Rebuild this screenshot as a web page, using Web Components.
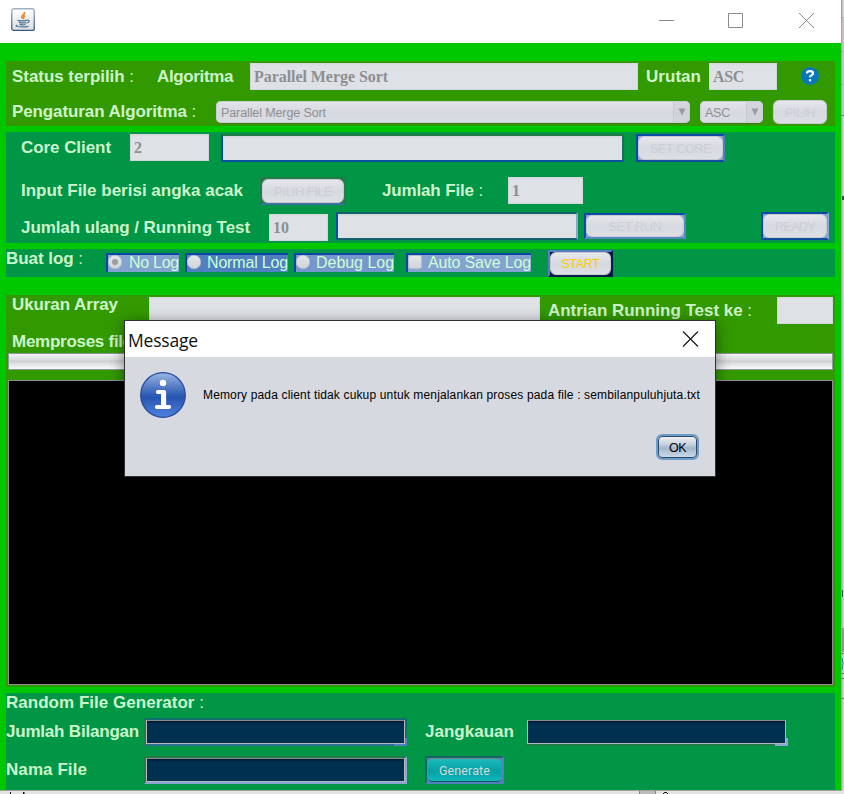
<!DOCTYPE html>
<html lang="id">
<head>
<meta charset="utf-8">
<title>Parallel Merge Sort</title>
<style>
html,body{margin:0;padding:0}
body{width:844px;height:794px;overflow:hidden;background:#e2e0e1;font-family:"Liberation Sans",Arial,sans-serif}
</style>
</head>
<body>
<app-desktop></app-desktop>
<script>
// g = gap before, t = offset from the row's top, w / h = box size
class Sized extends HTMLElement {
  connectedCallback() {
    if (this.shadowRoot) return;
    const m = { g: 'marginLeft', t: 'marginTop', w: 'width', h: 'height' };
    for (const k in m) if (this.hasAttribute(k)) this.style[m[k]] = this.getAttribute(k) + 'px';
    this.attachShadow({ mode: 'open' }).innerHTML =
      '<style>:host{display:block;box-sizing:border-box;flex:none}</style>' + this.view();
    this.ready();
  }
  view() { return '<slot></slot>'; }
  ready() {}
  a(n, d = '') { return this.getAttribute(n) ?? d; }
}

// Text spaced evenly so that it fills the element's width
class FitText extends Sized {
  view() {
    return `<style>:host{height:20px;line-height:20px;white-space:pre;font-size:17px;font-weight:bold;color:#ccf5cc}
    i{font-style:normal;font-weight:normal}span{display:inline-block}</style><span></span>`;
  }
  ready() {
    const s = this.shadowRoot.querySelector('span'), txt = this.textContent;
    if (txt.endsWith(' :')) s.innerHTML = txt.slice(0, -1) + '<i>:</i>'; else s.textContent = txt;
    if (this.hasAttribute('size')) this.style.fontSize = this.a('size') + 'px';
    const want = +this.a('w'), got = s.getBoundingClientRect().width;
    s.style.letterSpacing = (want - got) / txt.length + 'px';
  }
}
customElements.define('fit-text', FitText);

class UiRow extends Sized {
  view() { return '<style>:host{display:flex;align-items:flex-start}</style><slot></slot>'; }
}
customElements.define('ui-row', UiRow);

class UiPanel extends Sized {
  view() { return `<style>:host{display:flex;flex-direction:column;width:829px;margin-left:6px;background:${this.a('color')}}</style><slot></slot>`; }
}
customElements.define('ui-panel', UiPanel);

class TextField extends Sized {
  view() {
    return `<style>:host{background:linear-gradient(#d4d7dc,#dee1e6 3px);border:solid #d2d5db;border-width:0 1px 1px;padding:4px 0 0 3px;height:27px}
    :host([edge]){border:2px solid;border-color:${this.a('edge')};background-clip:padding-box}
    fit-text{color:#8e8f90;font-family:"Liberation Serif","Times New Roman",serif}</style>
    ${this.a('value') ? `<fit-text size="16" w="${this.a('tw')}">${this.a('value')}</fit-text>` : ''}`;
  }
}
customElements.define('text-field', TextField);

class DarkField extends Sized {
  view() {
    return `<style>:host{position:relative;border:2px solid;border-color:${this.a('edge')};height:28px}
    div{box-sizing:border-box;height:24px;border:1px solid #b8b8b8;border-top-color:#8a8a8e;background:linear-gradient(#001830,#003050 3px)}
    s{position:absolute;right:-2px;bottom:-2px;width:13px;height:2px;background:${this.a('corner')}}
    s+s{width:2px;height:8px}</style><div></div>${this.a('corner') ? '<s></s><s></s>' : ''}`;
  }
}
customElements.define('dark-field', DarkField);

class UiCombo extends Sized {
  view() {
    return `<style>:host{display:flex;height:22px;border-radius:5px;background:linear-gradient(#e2e4e9,#d6d9e0 55%,#dadde4);box-shadow:inset 0 0 0 1px #c9ccd3,0 1px 1px #3a7a1c;padding-left:5px;overflow:hidden}
    fit-text{color:#8e8f90;font-weight:normal;flex:none;margin-top:2px}
    b{margin-left:auto;width:17px;height:22px;background:#c9ccd480;border-left:1px solid #c6c9d0;box-sizing:border-box}
    svg{display:block;margin:7px 0 0 4px}</style>
    <fit-text size="12.5" w="${this.a('tw')}">${this.a('value')}</fit-text>
    <b><svg width="8" height="8"><path d="M.5 .5h7l-3.500 7z" fill="#9a9ca2"/></svg></b>`;
  }
}
customElements.define('ui-combo', UiCombo);

class UiButton extends Sized {
  view() {
    return `<style>:host{border:2px solid;border-color:${this.a('edge', 'transparent')};background:${this.a('under', 'transparent')};height:28px}
    div{box-sizing:border-box;height:100%;border-radius:6px;background:linear-gradient(#e5e7ec,#d6d9df 50%,#dcdfe4);border:1px solid #c8cad2;box-shadow:0 0 1px #7b7d84;display:flex;align-items:center;justify-content:center}
    fit-text{font-weight:normal;color:${this.a('ink', '#cbced4')}}</style>
    <div><fit-text size="${this.a('size', '12.5')}" t="${this.a('tt', 1)}" w="${this.a('tw')}">${this.textContent}</fit-text></div>`;
  }
}
customElements.define('ui-button', UiButton);

class UiToggle extends Sized {
  view() {
    const k = this.a('kind');
    const box = k === 'check'
      ? '<rect x=".5" y=".5" width="13" height="13" rx="2" fill="url(#g)" stroke="#b9bcc5"/>'
      : '<circle cx="7" cy="7" r="6.800" fill="url(#g)" stroke="#b9bcc5" stroke-width=".6"/>' +
        (k === 'on' ? '<circle cx="7" cy="7" r="3" fill="#9b9da3"/>' : '');
    return `<style>:host{display:flex;height:19px;border:solid #0846a2;border-width:2px 0 0 2px;background:${this.a('bg')}}
    svg{flex:none}fit-text{font-weight:normal;margin-top:-2px;margin-left:${this.a('tg')}px;color:#ccffd5}</style>
    <svg width="14" height="16"><defs><linearGradient id="g" x2="0" y2="1"><stop stop-color="#e6e7ea"/><stop offset="1" stop-color="#cfd2d9"/></linearGradient></defs>${box}</svg>
    <fit-text size="16" w="${this.a('tw')}">${this.textContent}</fit-text>`;
  }
}
customElements.define('ui-toggle', UiToggle);

class HelpIcon extends Sized {
  view() {
    return `<svg width="18" height="18" style="display:block"><circle cx="9" cy="9" r="9" fill="#0a77bd"/>
    <path d="M6 6.500V6q0-1.800 3-1.800t3 2q0 1.300-1.500 2-1.500.7-1.500 2" fill="none" stroke="#fff" stroke-width="2.200"/><path d="M7.900 12.200h2.300v2.100H7.900z" fill="#fff"/></svg>`;
  }
}
customElements.define('help-icon', HelpIcon);

class TitleBar extends Sized {
  view() {
    return `<style>:host{display:flex;height:43px;background:#fff;width:841px}svg{flex:none}</style>
    <svg width="24" height="24" style="margin:8px 0 0 11px"><defs><linearGradient id="j" x2="0" y2="1"><stop stop-color="#fff"/><stop offset="1" stop-color="#dcdddf"/></linearGradient><linearGradient id="k" x2="0" y2="1"><stop stop-color="#9fb2c4"/><stop offset="1" stop-color="#37597a"/></linearGradient></defs>
      <rect x=".75" y=".75" width="22.500" height="21.700" rx="2" fill="url(#j)" stroke="url(#k)" stroke-width="1.300"/>
      <path d="M13.300 4q.8 1.700-1.600 3.300-2 1.500.1 3.300M14 7.800q-2.300 1-1 3" fill="none" stroke="#ee8222" stroke-width="1.500"/>
      <path d="M6.500 12.400q4 1 9.500 0M8 14.400q3.500 1 7 .2M8.600 16.400q3 .9 6 .1M16 12.200q2.500-.4 2.200 1.100-.3 1.200-2.700 1.800M6.500 17.200q-3 .6 0 1.300 5 .9 11-.2" fill="none" stroke="#4d7898" stroke-width="1.200"/></svg>
    <svg width="160" height="17" style="margin:12px 0 0 624px"><path d="M0 8.500h15M69.500 1.500h14v14h-14zM140 1l15 15M155 1l-15 15" fill="none" stroke="#8b8b8b"/></svg>`;
  }
}
customElements.define('title-bar', TitleBar);

class ProgressBar extends Sized {
  view() {
    return `<style>:host{height:17px;border:1px solid #93959c;background:linear-gradient(#f4f4f5,#dcdde0 35%,#cfd0d4 50%,#dcdde0 60%,#fafafa)}</style>`;
  }
}
customElements.define('progress-bar', ProgressBar);

class ConsoleArea extends Sized {
  view() { return '<style>:host{background:#000;border:1px solid #8e8e96}</style>'; }
}
customElements.define('console-area', ConsoleArea);

class MessageDialog extends Sized {
  view() {
    return `<style>:host{position:absolute;left:124px;top:320px;width:592px;height:157px;border:1px solid #2f3230;background:#d6d9e0;box-shadow:0 3px 14px #0007}
    header{height:36px;background:#fff;display:flex}
    .t{font-family:"Open Sans","Noto Sans",sans-serif;font-weight:normal;color:#111;margin:9px 0 0 3px}
    header svg{margin:10px 0 0 484px}
    section{display:flex;padding:15px 0 0 15px}
    .m{color:#000;font-weight:normal;margin:13px 0 0 17px}
    .ok{margin:16px 0 0 531px;width:43px;height:26px;box-sizing:border-box;border-radius:6px;border:2px solid #6f9dc9;background:#d6d9e0}
    .ok div{height:22px;box-sizing:border-box;border:1px solid #2c4b6a;border-radius:4px;background:linear-gradient(#eef1f5,#c3cedb 40%,#a3b6c9 55%,#c9dbe9);display:flex;justify-content:center}
    .ok fit-text{color:#000;font-weight:normal;margin-top:1px}</style>
    <header><fit-text class="t" size="17.5" w="70">Message</fit-text>
      <svg width="17" height="17"><path d="M1 0.500l15 15M16 0.500l-15 15" stroke="#111" stroke-width="1.100"/></svg></header>
    <section><svg width="46" height="46"><defs><linearGradient id="b" x2="0" y2="1"><stop stop-color="#9db7e6"/><stop offset=".35" stop-color="#4d75c2"/><stop offset=".55" stop-color="#2655b0"/><stop offset="1" stop-color="#5182e0"/></linearGradient></defs>
      <circle cx="23" cy="23" r="22.300" fill="url(#b)" stroke="#24489a" stroke-width="1.200"/><circle cx="23" cy="11" r="3.200" fill="#fff"/>
      <path d="M18 20h6v15M17 35h12" fill="none" stroke="#fff" stroke-width="4.200" stroke-linecap="round" stroke-linejoin="round"/><path d="M21 20h5v14h-5z" fill="#fff"/></svg>
      <fit-text class="m" size="12" w="497">Memory pada client tidak cukup untuk menjalankan proses pada file : sembilanpuluhjuta.txt</fit-text></section>
    <div class="ok"><div><fit-text size="12.5" w="17">OK</fit-text></div></div>`;
  }
}
customElements.define('message-dialog', MessageDialog);

const G1 = '#339900', G2 = '#009645';
class AppDesktop extends HTMLElement {
  constructor() {
    super();
    this.attachShadow({ mode: 'open' }).innerHTML = `<style>
    :host{display:block;width:844px;height:794px;position:relative}
    main{width:841px;height:790px;background:#00c800;display:flex;flex-direction:column;box-shadow:0 0 3px 1px #7d7d7d}
    .gen{box-sizing:border-box;flex:none;width:79px;height:28px;margin:2px 0 0 18px;border:solid;border-color:#156868 #5080c0 #5080c0 #156868;border-width:2px;background:#5080c0}
    .gen div{height:24px;box-sizing:border-box;border:1px solid #807f83;border-bottom-color:#16545c;border-radius:5px;background:linear-gradient(#1bbabc,#07a0a4 55%,#10b8bc);display:flex;justify-content:center}
    .gen fit-text{color:#d2dcdc;font-weight:normal;font-family:Roboto,sans-serif;margin-top:2px}
    aside{position:absolute;left:841px;top:0;width:3px;height:794px}
    footer{display:block;position:absolute;left:0;top:790px}
    </style>
    <main><title-bar></title-bar>
    <ui-panel color="${G1}" t="18" h="65">
      <ui-row h="37"><fit-text g="6" t="6" w="122">Status terpilih :</fit-text><fit-text g="23" t="6" w="76">Algoritma</fit-text>
        <text-field g="17" t="2" w="388" value="Parallel Merge Sort" tw="134"></text-field><fit-text g="8" t="6" w="55">Urutan</fit-text>
        <text-field g="8" t="2" w="68" value="ASC" tw="31"></text-field><help-icon g="24" t="6" w="18"></help-icon></ui-row>
      <ui-row h="28"><fit-text g="6" t="4" w="184">Pengaturan Algoritma :</fit-text>
        <ui-combo g="20" t="3" w="474" value="Parallel Merge Sort" tw="105"></ui-combo>
        <ui-combo g="10" t="3" w="63" value="ASC" tw="25"></ui-combo><ui-button g="8" t="0" w="58" tw="30">PILIH</ui-button></ui-row>
    </ui-panel>
    <ui-panel color="${G2}" t="6" h="111">
      <ui-row h="43"><fit-text g="15" t="6" w="90">Core Client</fit-text><text-field g="19" t="2" w="79" value="2" tw="8"></text-field>
        <text-field g="12" t="2" w="403" h="28" edge="#1f7a45 #187060 #0b50a0 #0b4ca8"></text-field>
        <ui-button g="12" t="2" w="89" tw="61" edge="#0846a8 #5080c4 #0b4ca0 #0846a8" under="#8aa4d4">SET CORE</ui-button></ui-row>
      <ui-row h="36"><fit-text g="15" t="6" w="222">Input File berisi angka acak</fit-text>
        <ui-button g="17" t="2" w="86" tw="58" edge="#217c48 #217c48 #3b709e #217c48" under="#217c48">PILIH FILE</ui-button>
        <fit-text g="36" t="6" w="101">Jumlah File :</fit-text><text-field g="25" t="2" w="75" value="1" tw="8"></text-field></ui-row>
      <ui-row h="32"><fit-text g="15" t="7" w="229">Jumlah ulang / Running Test</fit-text><text-field g="19" t="3" w="59" value="10" tw="16"></text-field>
        <text-field g="8" t="1" w="242" h="28" edge="#12606a #8aa4d4 #12606a #0b4ca8"></text-field>
        <ui-button g="6" t="2" w="102" h="26" tw="53" edge="#0846a8 #5a86c6 #5a86c6 #0846a8" under="#8aa4d4">SET RUN</ui-button>
        <ui-button g="75" t="1" w="68" tw="40" edge="#0846a8 #8aa4d4 #0b4ca0 #0846a8" under="#8aa4d4">READY</ui-button></ui-row>
    </ui-panel>
    <ui-panel color="${G2}" t="6" h="28">
      <ui-row h="28"><fit-text g="0" t="0" w="77">Buat log :</fit-text>
        <ui-toggle kind="on" g="23" t="4" w="73" bg="#83a2d0" tg="7" tw="50">No Log</ui-toggle>
        <ui-toggle g="6" t="4" w="103" bg="#5080c0" tg="6" tw="81">Normal Log</ui-toggle>
        <ui-toggle g="6" t="4" w="100" bg="#7597cb" tg="6" tw="78">Debug Log</ui-toggle>
        <ui-toggle kind="check" g="12" t="4" w="125" bg="#85a2d1" tg="6" tw="103">Auto Save Log</ui-toggle>
        <ui-button g="17" t="1" w="65" h="27" tw="38" ink="#ffcc00" edge="#5080c0 #001848 #001848 #5080c0" under="#001848">START</ui-button></ui-row>
    </ui-panel>
    <ui-panel color="${G1}" t="18" h="392">
      <ui-row h="35"><fit-text g="6" t="0" w="106">Ukuran Array</fit-text><text-field g="31" t="2" w="391"></text-field>
        <fit-text g="8" t="6" w="204">Antrian Running Test ke :</fit-text><text-field g="25" t="2" w="56"></text-field></ui-row>
      <ui-row h="23"><fit-text g="6" t="2" w="120">Memproses file</fit-text></ui-row>
      <progress-bar g="2" w="825"></progress-bar><console-area g="2" t="10" w="825" h="305"></console-area>
    </ui-panel>
    <ui-panel color="${G2}" t="6" h="97">
      <ui-row h="23"><fit-text t="0" w="198">Random File Generator :</fit-text></ui-row>
      <ui-row h="38"><fit-text t="6" w="133">Jumlah Bilangan</fit-text><dark-field g="5" t="2" w="263" edge="#107070 #107070 #2c7090 #217c48" corner="#5080c0"></dark-field>
        <fit-text g="18" t="6" w="89">Jangkauan</fit-text><dark-field g="11" t="2" w="263" edge="transparent transparent #217c48 transparent" corner="#8aa4d4"></dark-field></ui-row>
      <ui-row h="36"><fit-text t="6" w="81">Nama File</fit-text><dark-field g="57" t="2" w="263" edge="#217c48 #8aa4d4 #8aa4d4 #217c48"></dark-field>
        <div class="gen"><div><fit-text size="12.5" w="51">Generate</fit-text></div></div></ui-row>
    </ui-panel></main>
    <aside><svg width="3" height="794" style="display:block"><path d="M0 0h3v794H0z" fill="#d8d4d8"/><path d="M0 0h1.500v790H0z" fill="#aaa6aa"/><path d="M0 17.500h3M0 51.500h3M0 84.500h3M0 115.500h3M0 653.500h3M0 673.500h3M0 678.500h3M0 698.500h3" stroke="#77747a"/><path d="M1 17h2v98H1z" fill="#c4c0c2"/><path d="M1 628h2v24H1z" fill="#969398"/><path d="M1 196h2v4H1zM1 590h1v7H1z" fill="#3c4864"/><path d="M1 658q2 5 0 12" stroke="#3878a8" fill="none"/></svg></aside>
    <footer><svg width="844" height="4" style="display:block"><path d="M0 0h844v4H0z" fill="#e4e3e2"/><path d="M0 .500h842" stroke="#a2a09f"/><path d="M639 1h17v3h-17z" fill="#bdbbbb"/><path d="M639.500 1v3M655.500 1v3" stroke="#858585"/><path d="M10 2h1v2h-1zM23 2h1.500v2H23zM663 3h1v1h-1zM664 2h3v1h-3zM667 3h1v1h-1z" fill="#111"/></svg></footer>
    <message-dialog></message-dialog>`;
  }
}
customElements.define('app-desktop', AppDesktop);
</script>
</body>
</html>
